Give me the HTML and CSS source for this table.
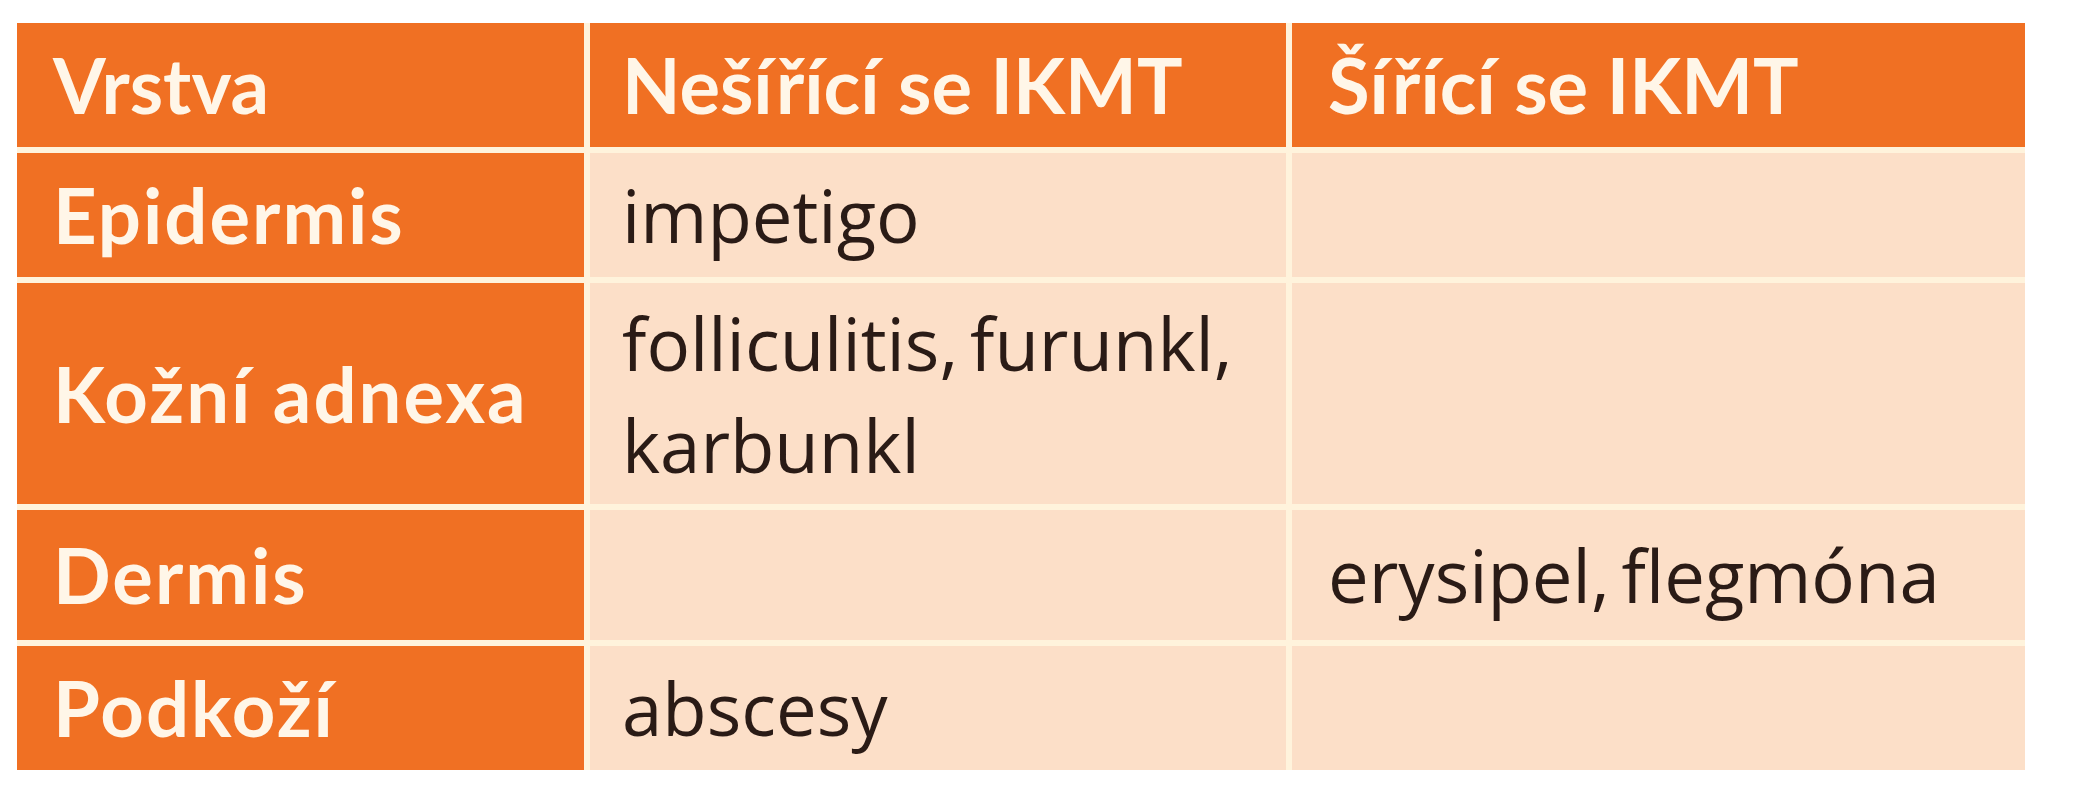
FILE: index.html
```html
<!DOCTYPE html>
<html lang="cs">
<head>
<meta charset="utf-8">
<title>Vrstva</title>
<link rel="stylesheet" href="styles.css">
</head>
<body>
<div class="sheet">
  <div class="grid">
    <div class="cell head first">Vrstva</div>
    <div class="cell head mid">Nešířící se IKMT</div>
    <div class="cell head last">Šířící se IKMT</div>

    <div class="cell label first">Epidermis</div>
    <div class="cell body mid">impetigo</div>
    <div class="cell body last"></div>

    <div class="cell label first">Kožní adnexa</div>
    <div class="cell body mid">folliculitis, furunkl,<br>karbunkl</div>
    <div class="cell body last"></div>

    <div class="cell label first">Dermis</div>
    <div class="cell body mid"></div>
    <div class="cell body last">erysipel, flegmóna</div>

    <div class="cell label first">Podkoží</div>
    <div class="cell body mid">abscesy</div>
    <div class="cell body last"></div>
  </div>
</div>
</body>
</html>
```
FILE: styles.css
```css
html, body {
  margin: 0;
  padding: 0;
  background: #ffffff;
}

.sheet {
  padding: 23px 0 0 17px;
}

.grid {
  display: grid;
  grid-template-columns: 567px 696px 733px;
  grid-template-rows: 124px 124px 221px 130px 124px;
  column-gap: 6px;
  row-gap: 6px;
  width: max-content;
  background: #fff3dc;
}

.cell {
  display: flex;
  align-items: center;
  line-height: 102px;
  white-space: nowrap;
}

.first { padding-left: 36px; }
.mid { padding-left: 32px; }
.last { padding-left: 36px; }

.head, .label {
  background: #f07023;
  color: #fff6e8;
  font-family: Lato, "Open Sans", sans-serif;
  font-weight: 700;
  font-size: 76px;
}

.label {
  letter-spacing: 2px;
}

.body {
  background: #fcdfc8;
  color: #2a1b16;
  font-family: "Open Sans", Lato, sans-serif;
  font-weight: 400;
  font-size: 72.5px;
  word-spacing: -7px;
}
```
